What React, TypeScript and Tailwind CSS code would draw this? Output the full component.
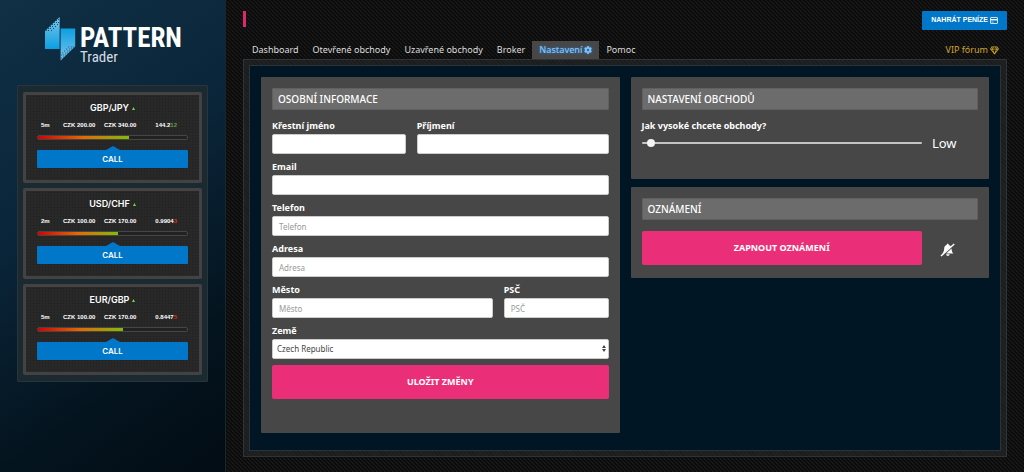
import React from "react";
import { FaCog, FaRegGem } from "react-icons/fa";

type Trade = {
  pair: string;
  period: string;
  stake: string;
  payout: string;
  rate: string;
  tail: string;
  up: boolean;
  progress: number;
};

const trades: Trade[] = [
  { pair: "GBP/JPY", period: "5m", stake: "CZK 200.00", payout: "CZK 340.00", rate: "144.2", tail: "12", up: true, progress: 61 },
  { pair: "USD/CHF", period: "2m", stake: "CZK 100.00", payout: "CZK 170.00", rate: "0.9904", tail: "3", up: false, progress: 54 },
  { pair: "EUR/GBP", period: "5m", stake: "CZK 100.00", payout: "CZK 170.00", rate: "0.8447", tail: "5", up: false, progress: 57 },
];

const tabs = ["Dashboard", "Otevřené obchody", "Uzavřené obchody", "Broker", "Nastavení", "Pomoc"];

const upperDots = [
  [47, 31], [49, 29], [51, 27], [53, 25], [55, 23], [57, 21],
  [49, 31], [51, 29], [53, 27], [55, 25], [57, 23], [59, 20],
  [52, 31], [54, 29], [56, 27], [58, 25], [59, 23],
];

function Logo() {
  return (
    <div className="flex justify-center gap-1 pl-px">
      <svg viewBox="45 16 32 46" className="h-[46px] w-8 shrink-0" aria-hidden="true">
        <defs>
          <linearGradient id="blade" x1="0" y1="0" x2="0" y2="1">
            <stop offset="0" stopColor="#7cc4ec" />
            <stop offset="1" stopColor="#0b9fe0" />
          </linearGradient>
          <linearGradient id="bladeDown" x1="0" y1="1" x2="0" y2="0">
            <stop offset="0" stopColor="#7cc4ec" />
            <stop offset="1" stopColor="#0b9fe0" />
          </linearGradient>
        </defs>
        <path d="M46 31 L60.6 17 V49 H46 Z" fill="url(#blade)" />
        <path d="M61.6 28.5 H76.2 V46.500 L61.6 60.500 Z" fill="url(#bladeDown)" />
        {upperDots.map(([x, y]) => (
          <g key={`${x}-${y}`} fill="#155070">
            <rect x={x} y={y - 1} width="1" height="1" />
            <rect x={121.2 - x} y={77.5 - y} width="1" height="1" />
          </g>
        ))}
      </svg>
      <div className="pt-[10px] font-['Roboto_Condensed','Liberation_Sans_Narrow','Liberation_Sans',sans-serif]">
        <div className="text-[27px] leading-[25px] font-bold text-white">PATTERN</div>
        <div className="text-[15px] leading-[12px] text-[#d5dde2]">Trader</div>
      </div>
    </div>
  );
}

function TradeCard({ trade }: { trade: Trade }) {
  return (
    <section className="rounded-xs border-3 border-[#434343] bg-[#282828] bg-[radial-gradient(#202020_1px,transparent_1px)] bg-size-[3px_3px] px-[11px] pt-[7px] pb-[12px] text-white">
      <h2 className="flex items-center justify-center gap-[3px] font-['Inter',sans-serif] text-[9px] leading-[12px] font-semibold">
        {trade.pair}
        <svg viewBox="0 0 4 4" className="size-[3px]" aria-hidden="true">
          <path d="M2 0 L4 4 H0 Z" fill="#6fdc3c" />
        </svg>
      </h2>
      <div className="mt-[7px] flex pr-[11px] pl-1 font-['Liberation_Sans',sans-serif] text-[6px] leading-[8px] font-bold">
        <span className="w-[22px]">{trade.period}</span>
        <span className="w-[41px]">{trade.stake}</span>
        <span>{trade.payout}</span>
        <span className="ml-auto">
          {trade.rate}
          <span className={trade.up ? "text-[#58a043]" : "text-[#d32a22]"}>{trade.tail}</span>
        </span>
      </div>
      <div className="mt-[6px] h-[5px] rounded-xs border border-[#454545] bg-[#222222]">
        <div
          className="h-full bg-[linear-gradient(90deg,#d60000,#e56a00_50%,#84bd00)]"
          style={{ width: `${trade.progress}%` }}
        />
      </div>
      <svg viewBox="0 0 14 4" className="mx-auto mt-[6px] h-1 w-[14px]" aria-hidden="true">
        <path d="M0 4 L7 0 L14 4 Z" fill="#0077c8" />
      </svg>
      <button
        type="button"
        className="block h-[18px] w-full rounded-[1px] bg-[#0077c8] font-['Inter',sans-serif] text-[8px] leading-[18px] font-semibold"
      >
        CALL
      </button>
    </section>
  );
}

function PanelTitle({ children }: { children: React.ReactNode }) {
  return (
    <h2 className="h-[22px] rounded-[1px] border border-[#606060] bg-[#6c6c6c] px-[5px] text-[10px] leading-[20px] font-medium">
      {children}
    </h2>
  );
}

function Field({ id, label, placeholder, span }: { id: string; label: string; placeholder?: string; span: string }) {
  return (
    <div className={span}>
      <label htmlFor={id} className="mb-[2px] block leading-[12px] font-bold">
        {label}
      </label>
      <input
        id={id}
        placeholder={placeholder}
        className="block h-[20px] w-full rounded-xs border border-[#cccccc] bg-white px-[6px] text-[8px] text-[#555555] placeholder:text-[#999999]"
      />
    </div>
  );
}

function BellOff() {
  return (
    <svg viewBox="0 0 15 14" className="h-[14px] w-[15px]" aria-hidden="true">
      <path
        d="M6.600 2 C6.600 .4 8.800 .4 8.800 2 C9.700 2.200 10.400 2.700 10.900 3.400 L3.200 10.500 H2.200 C3.700 9.100 4 7.700 4.200 5.300 C4.400 3.500 5.300 2.300 6.600 2 Z"
        fill="white"
      />
      <path d="M11.500 5.400 C11.700 8 12.300 9.300 13.300 10.500 H6.200 Z" fill="white" />
      <path d="M6 11.300 H9.600 C9.300 13.500 6.600 13.500 6 11.300 Z" fill="white" />
      <path d="M1 13 L14.200 1" stroke="white" strokeWidth="1.500" />
    </svg>
  );
}

function CardIcon() {
  return (
    <svg viewBox="0 0 8 7" className="h-[7px] w-2" aria-hidden="true">
      <rect x=".5" y=".5" width="7" height="6" rx=".5" fill="none" stroke="white" strokeWidth=".8" />
      <rect x=".5" y="2" width="7" height="1.4" fill="white" />
      <rect x="1.500" y="4.700" width="2" height=".7" fill="white" />
    </svg>
  );
}

export default function App() {
  return (
    <div className="flex min-h-screen bg-[#0b0b0b] bg-[linear-gradient(45deg,#191919_25%,transparent_25%,transparent_60%,#151515_60%,#151515_75%,transparent_75%)] bg-size-[4px_4px] font-['Noto_Sans','Open_Sans',sans-serif] text-[9px] text-white">
      <aside className="w-[226px] shrink-0 border-r border-[#17262f] bg-[linear-gradient(145deg,#103045,#0a2539_40%,#04141f_75%,#020c14)] px-[17px] pt-4">
        <Logo />
        <div className="mt-[22px] flex flex-col gap-[5px] rounded-[1px] border border-[#2a3439] bg-[#1b2930] px-[5px] py-[6px]">
          {trades.map((trade) => (
            <TradeCard key={trade.pair} trade={trade} />
          ))}
        </div>
      </aside>

      <main className="min-w-0 flex-1 px-[17px] pt-[11px] pb-[14px]">
        <header className="flex h-[20px] items-start justify-between">
          <div className="h-4 w-[3px] bg-[#d92a6c]" />
          <button
            type="button"
            className="flex h-[19px] items-center gap-[2px] rounded-[1px] bg-[#0077c8] px-[9px] font-['Liberation_Sans',sans-serif] text-[7px] font-bold"
          >
            NAHRÁT PENÍZE
            <CardIcon />
          </button>
        </header>

        <nav className="mt-[10px] flex h-[18px] pl-[2px] leading-[18px] text-[#dddddd]">
          {tabs.map((tab) =>
            tab === "Nastavení" ? (
              <a
                key={tab}
                href="#nastaveni"
                aria-current="page"
                className="flex items-center gap-[2px] bg-[#474747] px-[7px] font-medium text-[#80c4ff] [text-shadow:0_0_3px_#2f86d8]"
              >
                {tab}
                <FaCog className="size-2 drop-shadow-[0_0_1px_#2f86d8]" />
              </a>
            ) : (
              <a key={tab} href="#" className="px-[7px]">
                {tab}
              </a>
            ),
          )}
          <a href="#forum" className="ml-auto flex items-center gap-[2px] px-2 text-[#d3a52c]">
            VIP fórum
            <FaRegGem className="size-[9px]" />
          </a>
        </nav>

        <div className="border border-[#303436] bg-[repeating-linear-gradient(45deg,#202122,#202122_2px,#1a1b1c_2px,#1a1b1c_3px)] p-[5px]">
          <div className="grid grid-cols-2 items-start gap-[11px] border border-[#2b3338] bg-[#001624] px-[11px] pt-[11px] pb-[17px]">
            <form className="rounded-[1px] bg-[#474747] px-[11px] pt-[11px] pb-[34px]">
              <PanelTitle>OSOBNÍ INFORMACE</PanelTitle>
              <div className="mt-[10px] grid grid-cols-12 gap-x-[11px] gap-y-[7px]">
                <Field id="first-name" label="Křestní jméno" span="col-span-5" />
                <Field id="last-name" label="Příjmení" span="col-span-7" />
                <Field id="email" label="Email" span="col-span-12" />
                <Field id="phone" label="Telefon" placeholder="Telefon" span="col-span-12" />
                <Field id="address" label="Adresa" placeholder="Adresa" span="col-span-12" />
                <Field id="city" label="Město" placeholder="Město" span="col-span-8" />
                <Field id="zip" label="PSČ" placeholder="PSČ" span="col-span-4" />
                <div className="col-span-12">
                  <label htmlFor="country" className="mb-[2px] block leading-[12px] font-bold">
                    Země
                  </label>
                  <div className="relative">
                    <select
                      id="country"
                      className="block h-[20px] w-full appearance-none rounded-xs border border-[#cccccc] bg-white px-1 text-[8px] text-[#444444]"
                    >
                      <option>Czech Republic</option>
                    </select>
                    <svg viewBox="0 0 4 7" className="pointer-events-none absolute top-[6px] right-[3px] h-[7px] w-1" aria-hidden="true">
                      <path d="M2 0 L4 3 H0 Z M2 7 L4 4 H0 Z" fill="#444444" />
                    </svg>
                  </div>
                </div>
              </div>
              <button type="submit" className="mt-[6px] block h-[34px] w-full rounded-xs bg-[#ea2f78] font-bold">
                ULOŽIT ZMĚNY
              </button>
            </form>

            <div className="flex flex-col gap-2">
              <section className="rounded-[1px] bg-[#474747] px-[11px] pt-[11px] pb-[27px]">
                <PanelTitle>NASTAVENÍ OBCHODŮ</PanelTitle>
                <label htmlFor="size" className="mt-[10px] block leading-[12px] font-bold">
                  Jak vysoké chcete obchody?
                </label>
                <div className="mt-[2px] flex h-[18px] items-center">
                  <input
                    id="size"
                    type="range"
                    min={0}
                    max={100}
                    defaultValue={2}
                    className="h-2 w-10/12 appearance-none bg-transparent [&::-webkit-slider-runnable-track]:h-[2px] [&::-webkit-slider-runnable-track]:rounded-full [&::-webkit-slider-runnable-track]:bg-[#c4c4c4] [&::-webkit-slider-thumb]:-mt-[3px] [&::-webkit-slider-thumb]:size-2 [&::-webkit-slider-thumb]:appearance-none [&::-webkit-slider-thumb]:rounded-full [&::-webkit-slider-thumb]:bg-[#f4f4f4]"
                  />
                  <output htmlFor="size" className="pl-[10px] text-[13px] leading-[18px]">
                    Low
                  </output>
                </div>
              </section>

              <section className="rounded-[1px] bg-[#474747] px-[11px] pt-[11px] pb-[13px]">
                <PanelTitle>OZNÁMENÍ</PanelTitle>
                <div className="mt-[11px] flex items-center">
                  <button type="button" className="block h-[34px] w-10/12 rounded-xs bg-[#ea2f78] font-bold">
                    ZAPNOUT OZNÁMENÍ
                  </button>
                  <div className="flex flex-1 pl-[18px] pt-[3px]">
                    <BellOff />
                  </div>
                </div>
              </section>
            </div>
          </div>
        </div>
      </main>
    </div>
  );
}
